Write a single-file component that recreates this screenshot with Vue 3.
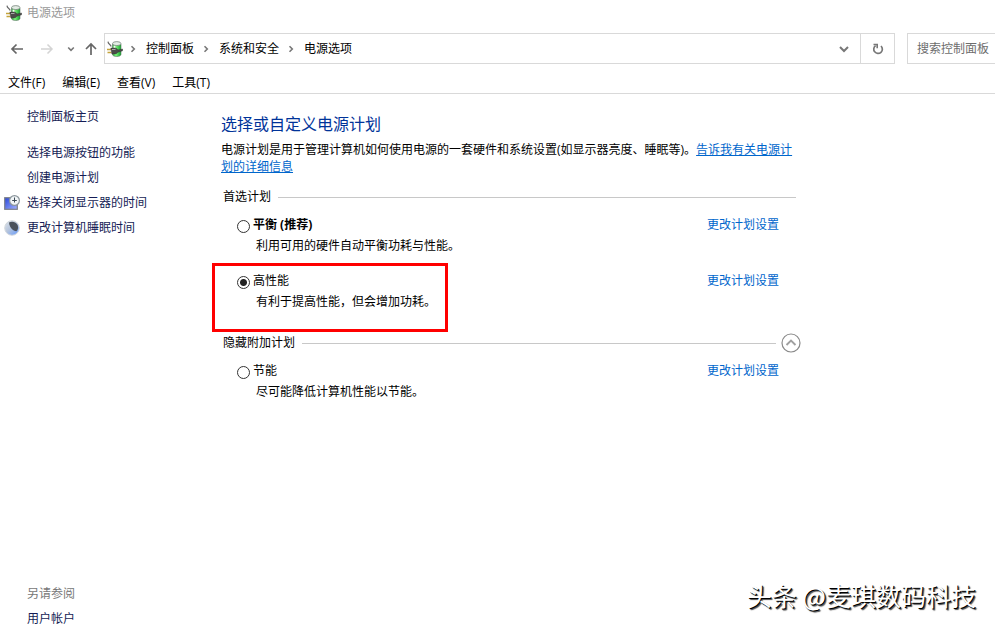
<template>
  <div class="window">
    <header>
      <div class="title-bar">
        <svg class="power-icon" viewBox="0 0 16 16" aria-hidden="true"><use href="#power" /></svg>
        <span>电源选项</span>
      </div>

      <div class="nav-bar">
        <div class="nav-buttons">
          <button type="button" class="nav-btn" aria-label="后退">
            <svg width="14" height="14" viewBox="0 0 14 14"><path d="M13 7H2M6.5 2.5L2 7l4.5 4.5" stroke="#666" stroke-width="1.7" /></svg>
          </button>
          <button type="button" class="nav-btn" aria-label="前进" disabled>
            <svg width="14" height="14" viewBox="0 0 14 14"><path d="M1 7h11M7.5 2.5L12 7l-4.5 4.5" stroke="#d4d4d4" stroke-width="1.5" /></svg>
          </button>
          <button type="button" class="nav-btn small" aria-label="最近浏览的位置">
            <svg width="8" height="8" viewBox="0 0 8 8"><path d="M1.2 2.5L4 5.3l2.8-2.8" stroke="#777" stroke-width="1.6" /></svg>
          </button>
          <button type="button" class="nav-btn" aria-label="上移">
            <svg width="14" height="14" viewBox="0 0 14 14"><path d="M7 13V2M2 7l5-5 5 5" stroke="#666" stroke-width="1.7" /></svg>
          </button>
        </div>

        <nav class="address">
          <svg class="power-icon" viewBox="0 0 16 16" aria-hidden="true"><use href="#power" /></svg>
          <template v-for="crumb in crumbs" :key="crumb">
            <svg class="crumb-arrow" width="8" height="8" viewBox="0 0 8 8"><path d="M2.5 1.2L5.3 4 2.5 6.8" stroke="#777" stroke-width="1.6" /></svg>
            <a href="#" class="crumb">{{ crumb }}</a>
          </template>
          <button type="button" class="drop" aria-label="以前的位置">
            <svg width="12" height="12" viewBox="0 0 12 12"><path d="M2 4l4 4 4-4" stroke="#777" stroke-width="2" /></svg>
          </button>
          <button type="button" class="refresh" aria-label="刷新">
            <svg width="12" height="12" viewBox="0 0 12 12">
              <path d="M9 3A4.3 4.3 0 1 1 3.6 2.6" stroke="#777" stroke-width="1.7" />
              <path d="M1.5 1.5h3.7v3.8" stroke="#777" stroke-width="1.6" />
            </svg>
          </button>
        </nav>

        <input v-model="query" class="search" type="text" placeholder="搜索控制面板" aria-label="搜索控制面板" />
      </div>

      <div class="menu-bar">
        <button v-for="item in menus" :key="item" type="button">{{ item }}</button>
      </div>
    </header>

    <div class="body">
      <aside class="sidebar">
        <a href="#" class="home">控制面板主页</a>
        <ul>
          <li v-for="task in tasks" :key="task.text">
            <svg v-if="task.icon === 'display'" width="16" height="16" viewBox="0 0 16 16">
              <defs>
                <linearGradient id="screen" x1="0" y1="0" x2="1" y2="1">
                  <stop offset="0" stop-color="#2846d8" />
                  <stop offset="1" stop-color="#a4b4ff" />
                </linearGradient>
              </defs>
              <rect x="0.7" y="2.7" width="12.600" height="11.600" fill="url(#screen)" stroke="#7d8088" stroke-width="1.2" />
              <circle cx="10.5" cy="5.5" r="4.9" fill="#f1f5f7" stroke="#8c969c" stroke-width="1.2" />
              <path d="M10.5 2.5v5M8.2 5.5h4.6" stroke="#3c4a55" />
            </svg>
            <svg v-else-if="task.icon === 'moon'" width="16" height="16" viewBox="0 0 16 16">
              <defs>
                <linearGradient id="moon" x1="0" y1="0" x2="1" y2="1">
                  <stop offset="0" stop-color="#dfe5ea" />
                  <stop offset="0.45" stop-color="#b6c5dc" />
                  <stop offset="0.8" stop-color="#7fa8f4" />
                  <stop offset="1" stop-color="#d6e7ff" />
                </linearGradient>
              </defs>
              <circle cx="8" cy="8" r="7.3" fill="url(#moon)" stroke="#d3d8dd" />
              <path d="M5 2.5C8 .8 12.5 2 13.8 5.5c.8 2.300 0 4.700-1.500 5.800C9 11 5.500 7.500 5 2.500z" fill="#4a525c" />
            </svg>
            <a href="#">{{ task.text }}</a>
          </li>
        </ul>
        <div class="see-also">
          <p>另请参阅</p>
          <a href="#">用户帐户</a>
        </div>
      </aside>

      <main class="content">
        <h1>选择或自定义电源计划</h1>
        <p class="intro">电源计划是用于管理计算机如何使用电源的一套硬件和系统设置(如显示器亮度、睡眠等)。<a href="#">告诉我有关电源计划的详细信息</a></p>

        <section v-for="group in groups" :key="group.title" class="group">
          <div class="group-head">
            <h2>{{ group.title }}</h2>
            <span class="rule"></span>
            <button v-if="group.collapsible" type="button" class="collapse" :aria-label="group.title" @click="expanded = !expanded">
              <svg width="20" height="20" viewBox="0 0 20 20">
                <circle cx="10" cy="10" r="9" stroke="#8a8a8a" stroke-width="1.2" />
                <path :d="expanded ? 'M5.5 12L10 7.5l4.5 4.5' : 'M5.5 8L10 12.5 14.5 8'" stroke="#a0a0a0" stroke-width="1.9" />
              </svg>
            </button>
          </div>
          <div v-if="!group.collapsible || expanded" class="plans">
            <div v-for="plan in group.plans" :key="plan.id" class="plan">
              <input :id="plan.id" v-model="selected" type="radio" name="plan" :value="plan.id" />
              <div class="plan-text">
                <label :for="plan.id" :class="{ bold: plan.recommended }">{{ plan.name }}</label>
                <p>{{ plan.desc }}</p>
              </div>
              <a href="#">更改计划设置</a>
              <span v-if="plan.marked" class="marker"></span>
            </div>
          </div>
        </section>
      </main>
    </div>

    <div class="watermark">头条 @麦琪数码科技</div>

    <svg class="symbols" aria-hidden="true">
      <defs>
        <linearGradient id="battery" x1="0" y1="0" x2="1" y2="0">
          <stop offset="0" stop-color="#2fae3c" />
          <stop offset="0.4" stop-color="#7df27c" />
          <stop offset="1" stop-color="#12a52a" />
        </linearGradient>
      </defs>
      <symbol id="power" viewBox="0 0 16 16">
        <path d="M5.5 3v10.300c0 3 8.500 3 8.500 0V3z" fill="url(#battery)" stroke="#5d7565" stroke-width="0.6" />
        <ellipse cx="9.750" cy="2.600" rx="4.200" ry="2" fill="#e3ece4" stroke="#78857d" stroke-width="0.8" />
        <path d="M7.500 4.800v3" stroke="#f4fff4" stroke-width="1.800" />
        <path d="M1 .6C1.300 3.800 3.300 2.500 4.200 5.500" stroke="#666" stroke-width="1.200" fill="none" />
        <path d="M0 8.500h4M.5 11.500h4" stroke="#c4a43c" stroke-width="1.600" />
        <path d="M3.800 7h3.700c1.800 0 3 .8 3.300 2l4.800-1v1.800l-4.700 1.400c-.8 1.400-2.500 1.900-6 1.800z" fill="#4b4c49" stroke="#2a2a2a" stroke-width="0.4" />
        <path d="M5 8.500h3.500" stroke="#a8a8a8" stroke-width="1" />
      </symbol>
    </svg>
  </div>
</template>

<script setup>
import { ref } from 'vue';

const query = ref('');
const selected = ref('high');
const expanded = ref(true);

const crumbs = ['控制面板', '系统和安全', '电源选项'];
const menus = ['文件(F)', '编辑(E)', '查看(V)', '工具(T)'];

const tasks = [
  { text: '选择电源按钮的功能' },
  { text: '创建电源计划' },
  { text: '选择关闭显示器的时间', icon: 'display' },
  { text: '更改计算机睡眠时间', icon: 'moon' },
];

const groups = [
  {
    title: '首选计划',
    plans: [
      { id: 'balanced', name: '平衡 (推荐)', desc: '利用可用的硬件自动平衡功耗与性能。', recommended: true },
      { id: 'high', name: '高性能', desc: '有利于提高性能，但会增加功耗。', marked: true },
    ],
  },
  {
    title: '隐藏附加计划',
    collapsible: true,
    plans: [{ id: 'saver', name: '节能', desc: '尽可能降低计算机性能以节能。' }],
  },
];
</script>

<style>
body {
  margin: 0;
  background: #fff;
}
</style>

<style scoped>
.window {
  position: relative;
  display: flex;
  flex-direction: column;
  min-height: 100vh;
  overflow: hidden;
  font-family: "Open Sans", "Noto Sans CJK SC", sans-serif;
  font-size: 12px;
  line-height: 16px;
  color: #000;
}

h1, h2, p, ul {
  margin: 0;
  padding: 0;
  font-weight: 400;
}

ul {
  list-style: none;
}

a {
  color: #0066cc;
  text-decoration: none;
}

button {
  display: flex;
  align-items: center;
  justify-content: center;
  padding: 0;
  border: 0;
  background: none;
  font: inherit;
  color: inherit;
}

svg {
  flex: none;
  fill: none;
}

.symbols {
  position: absolute;
  width: 0;
  height: 0;
}

.power-icon {
  width: 16px;
  height: 16px;
}

.title-bar {
  display: flex;
  align-items: center;
  gap: 5px;
  height: 25px;
  padding-left: 6px;
  color: #999;
}

.nav-bar {
  display: flex;
  height: 31px;
  margin-top: 8px;
}

.nav-buttons {
  display: flex;
  align-items: center;
  gap: 16px;
  width: 94px;
  padding-left: 10px;
}

.nav-btn.small {
  margin: 0 -7px 0 -3px;
}

.address {
  display: flex;
  flex: 1;
  align-items: center;
  padding-left: 2px;
  border: 1px solid #d9d9d9;
}

.address .power-icon {
  margin-right: -2px;
}

.crumb-arrow {
  margin: 0 9px 0 8px;
}

.crumb {
  color: #000;
}

.drop {
  width: 32px;
  height: 100%;
  margin-left: auto;
}

.refresh {
  width: 34px;
  height: 100%;
  border-left: 1px solid #d9d9d9;
}

.search {
  box-sizing: border-box;
  width: 88px;
  margin-left: 12px;
  padding: 0 0 0 9px;
  border: 1px solid #d9d9d9;
  border-right: 0;
  border-radius: 0;
  font: inherit;
}

.search::placeholder {
  color: #6d6d6d;
}

.menu-bar {
  display: flex;
  gap: 17px;
  height: 21px;
  padding: 8px 8px 0;
  border-bottom: 1px solid #d9d9d9;
}

.body {
  display: flex;
  flex: 1;
}

.sidebar {
  display: flex;
  flex-direction: column;
  box-sizing: border-box;
  width: 221px;
  padding: 10px 0 0 27px;
  line-height: 25px;
}

.sidebar a {
  color: #151c55;
}

.home {
  margin: 0 0 11px;
}

.sidebar li {
  display: flex;
  align-items: center;
  gap: 7px;
}

.sidebar li svg {
  margin-left: -23px;
}

.see-also {
  margin-top: auto;
  margin-bottom: -4px;
}

.see-also p {
  color: #777;
}

.content {
  flex: 0 1 580px;
  padding-top: 19px;
}

h1 {
  font-size: 16px;
  line-height: 22px;
  color: #003399;
}

.intro {
  margin: 6px 5px 0 0;
  line-height: 17px;
}

.intro a {
  text-decoration: underline;
}

.group {
  padding: 0 0 0 2px;
}

.group-head {
  display: flex;
  align-items: center;
  height: 20px;
  margin-top: 12px;
}

h2 {
  font-size: 12px;
}

.rule {
  flex: 1;
  height: 1px;
  margin: 0 5px 0 7px;
  background: #c8c8c8;
}

.collapse {
  width: 20px;
  height: 20px;
}

.plans {
  display: flex;
  flex-direction: column;
  gap: 8px;
  padding-top: 10px;
}

.plan {
  position: relative;
  display: flex;
  align-items: flex-start;
  gap: 3px;
  min-height: 48px;
  padding: 0 22px 0 14px;
}

.plan input {
  appearance: none;
  box-sizing: border-box;
  flex: none;
  width: 13px;
  height: 13px;
  margin: 3px 0 0;
  border: 1px solid #333;
  border-radius: 50%;
  background: #fff;
}

.plan input:checked {
  background: radial-gradient(circle, #222 3px, #fff 4px);
}

.plan-text {
  flex: 1;
}

.plan-text p {
  padding: 5px 0 0 3px;
}

.bold {
  font-weight: 700;
}

.marker {
  position: absolute;
  top: -10px;
  left: -11px;
  box-sizing: border-box;
  width: 236px;
  height: 69px;
  border: 3px solid #f00;
  pointer-events: none;
}

.watermark {
  position: absolute;
  right: 19px;
  bottom: 14px;
  font-family: "Noto Sans CJK SC", sans-serif;
  font-size: 25px;
  line-height: 36px;
  color: #fff;
  text-shadow: 1px 1px 0 #000, 2px 2px 1px rgba(0, 0, 0, 0.7);
}
</style>
